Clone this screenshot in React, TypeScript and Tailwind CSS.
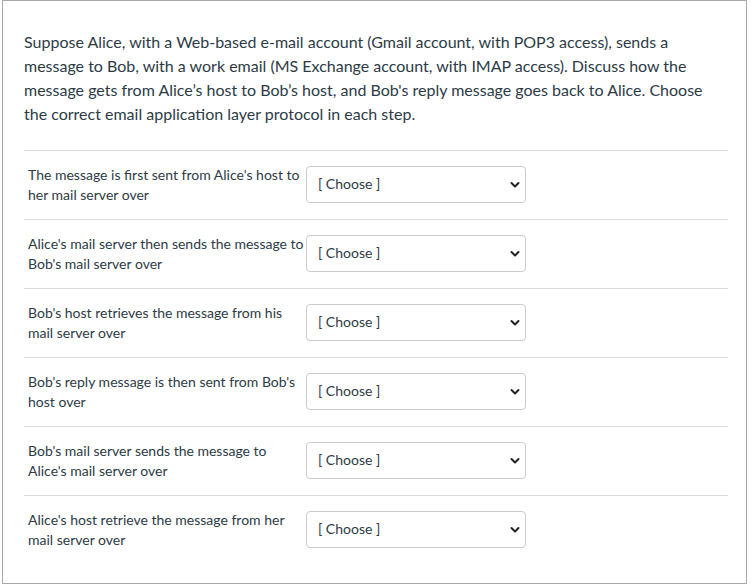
import React from 'react';

const steps = [
  "The message is first sent from Alice's host to her mail server over",
  "Alice's mail server then sends the message to Bob's mail server over",
  "Bob's host retrieves the message from his mail server over",
  "Bob's reply message is then sent from Bob's host over",
  "Bob's mail server sends the message to Alice's mail server over",
  "Alice's host retrieve the message from her mail server over",
];

const Chevron = () => (
  <svg width="10" height="7" viewBox="0 0 10 7" className="pointer-events-none absolute right-[6px] top-1/2 -translate-y-1/2">
    <path d="M1.5 1.5 L5 5 L8.5 1.5" fill="none" stroke="#222" strokeWidth="2" strokeLinecap="round" strokeLinejoin="round" />
  </svg>
);

export default function App() {
  return (
    <div className="w-[752px] h-[585px] bg-white font-['Lato','Liberation_Sans',sans-serif] text-[#2d3b45]">
      <div className="ml-[2px] w-[745px] h-[584px] border border-[#a8a8a8] pl-[21px] pr-[18px] pt-[29px]">
        <p className="text-[16px] leading-[24px] w-[690px]">
          Suppose Alice, with a Web-based e-mail account (Gmail account, with POP3 access), sends a message to Bob, with a work email (MS Exchange account, with IMAP access). Discuss how the message gets from Alice’s host to Bob’s host, and Bob's reply message goes back to Alice. Choose the correct email application layer protocol in each step.
        </p>
        <div className="mt-[24px]">
          {steps.map((s, i) => (
            <div key={i} className="border-t border-[#dcdcdc] flex items-start py-[14px] pl-[4px]">
              <div className="w-[278px] text-[14px] leading-[20px]">{s}</div>
              <div className="relative w-[220px] h-[37px] mt-[1px]">
                <select className="appearance-none w-full h-full border border-[#c7cdd1] rounded-[4px] bg-white pl-[11px] pb-[2px] text-[14px] text-[#2d3b45] outline-none">
                  <option>[ Choose ]</option>
                </select>
                <Chevron />
              </div>
            </div>
          ))}
        </div>
      </div>
    </div>
  );
}
